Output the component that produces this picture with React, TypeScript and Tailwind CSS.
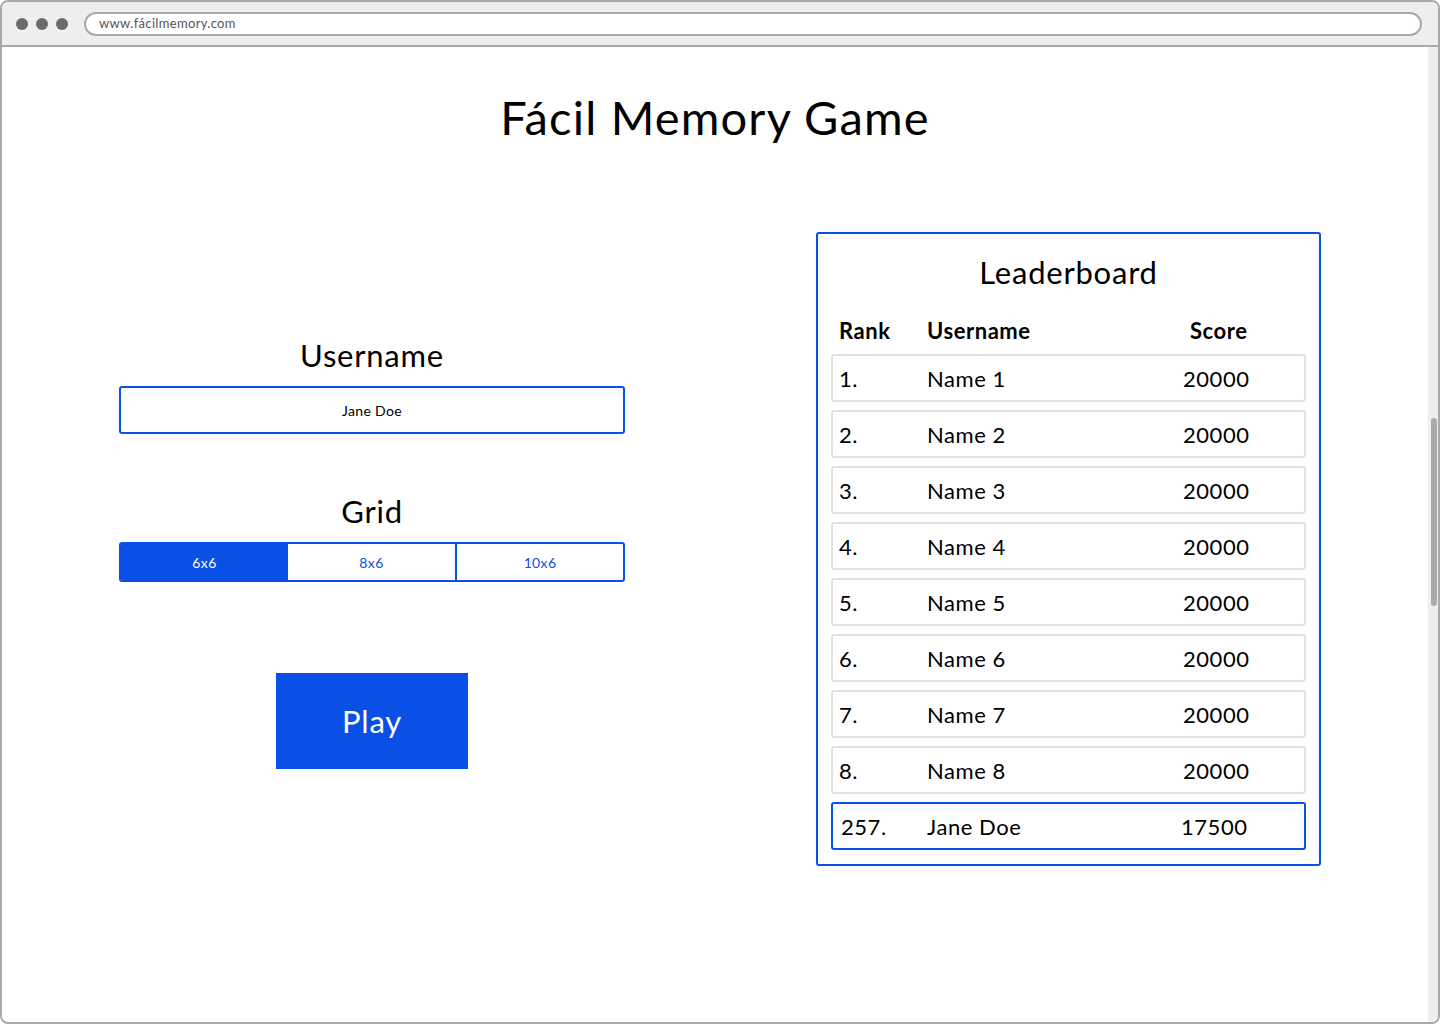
import React from "react";

const rows = [
  { rank: "1.", name: "Name 1", score: "20000" },
  { rank: "2.", name: "Name 2", score: "20000" },
  { rank: "3.", name: "Name 3", score: "20000" },
  { rank: "4.", name: "Name 4", score: "20000" },
  { rank: "5.", name: "Name 5", score: "20000" },
  { rank: "6.", name: "Name 6", score: "20000" },
  { rank: "7.", name: "Name 7", score: "20000" },
  { rank: "8.", name: "Name 8", score: "20000" },
];

const font = { fontFamily: "Lato, 'Noto Sans', sans-serif" };

function BrowserBar() {
  return (
    <div className="h-[45px] shrink-0 bg-[#eeeeee] border-b-2 border-[#a9a9a9] flex items-center rounded-t-[8px]">
      <div className="flex gap-[8px] pl-[14px]">
        <span className="w-[12px] h-[12px] rounded-full bg-[#6b6b6b]" />
        <span className="w-[12px] h-[12px] rounded-full bg-[#6b6b6b]" />
        <span className="w-[12px] h-[12px] rounded-full bg-[#6b6b6b]" />
      </div>
      <div className="ml-[16px] mr-[16px] flex-1 h-[24px] rounded-full border-2 border-[#a9a9a9] bg-white flex items-center pl-[13px] text-[13px] tracking-wide text-[#555555]">
        www.fácilmemory.com
      </div>
    </div>
  );
}

function LeftPanel() {
  return (
    <div className="w-[506px] mt-[103px] flex flex-col items-center">
      <div className="text-[31px] leading-[40px] tracking-wide text-black">Username</div>
      <div className="mt-[11px] w-full h-[48px] border-2 border-[#0a50e6] rounded-[3px] flex items-center justify-center text-[14px] tracking-wide text-black">
        Jane Doe
      </div>
      <div className="mt-[57px] text-[31px] leading-[40px] tracking-wide text-black">Grid</div>
      <div className="mt-[11px] w-full h-[40px] border-2 border-[#0a50e6] rounded-[3px] flex text-[14px] tracking-wide overflow-hidden">
        <div className="w-[167px] bg-[#0a50e6] text-white flex items-center justify-center">6x6</div>
        <div className="flex-1 border-r-2 border-[#0a50e6] text-[#0a50e6] flex items-center justify-center">8x6</div>
        <div className="w-[166px] text-[#0a50e6] flex items-center justify-center">10x6</div>
      </div>
      <button className="mt-[91px] w-[192px] h-[96px] bg-[#0a50e6] text-white text-[31px] tracking-wide">
        Play
      </button>
    </div>
  );
}

function Leaderboard() {
  return (
    <div className="w-[505px] border-2 border-[#0a50e6] rounded-[3px] px-[13px] pt-[18px] pb-[14px]">
      <div className="text-center text-[31px] leading-[40px] tracking-wide text-black">Leaderboard</div>
      <div className="mt-[24px] grid grid-cols-[88px_256px_1fr] pl-[8px] text-[22px] leading-[30px] font-bold tracking-wide text-black">
        <span>Rank</span>
        <span>Username</span>
        <span className="pl-[7px]">Score</span>
      </div>
      <div className="mt-[8px] flex flex-col gap-[8px]">
        {rows.map((r) => (
          <div
            key={r.rank}
            className="h-[48px] border-2 border-[#e2e2e2] rounded-[3px] grid grid-cols-[88px_256px_1fr] items-center pl-[6px] text-[22px] tracking-wide text-black"
          >
            <span>{r.rank}</span>
            <span>{r.name}</span>
            <span>{r.score}</span>
          </div>
        ))}
        <div className="h-[48px] border-2 border-[#0a50e6] rounded-[3px] grid grid-cols-[88px_256px_1fr] items-center pl-[8px] text-[22px] tracking-wide text-black">
          <span>257.</span>
          <span className="-ml-[2px]">Jane Doe</span>
          <span className="-ml-[4px]">17500</span>
        </div>
      </div>
    </div>
  );
}

export default function App() {
  return (
    <div className="w-[1440px] h-[1024px] bg-white" style={font}>
      <div className="w-full h-full border-2 border-[#a9a9a9] rounded-[8px] flex flex-col overflow-hidden">
        <BrowserBar />
        <div className="flex-1 flex">
          <div className="flex-1 flex flex-col">
            <h1 className="pt-[40px] text-center text-[47px] leading-[60px] tracking-wide text-black">Fácil Memory Game</h1>
            <div className="mt-[85px] flex items-start pl-[117px] gap-[191px]">
              <LeftPanel />
              <Leaderboard />
            </div>
          </div>
          <div className="w-[10px] bg-[#eeeeee] relative">
            <div className="absolute left-[3px] top-[371px] w-[6px] h-[188px] rounded-full bg-[#aaaaaa]" />
          </div>
        </div>
      </div>
    </div>
  );
}
